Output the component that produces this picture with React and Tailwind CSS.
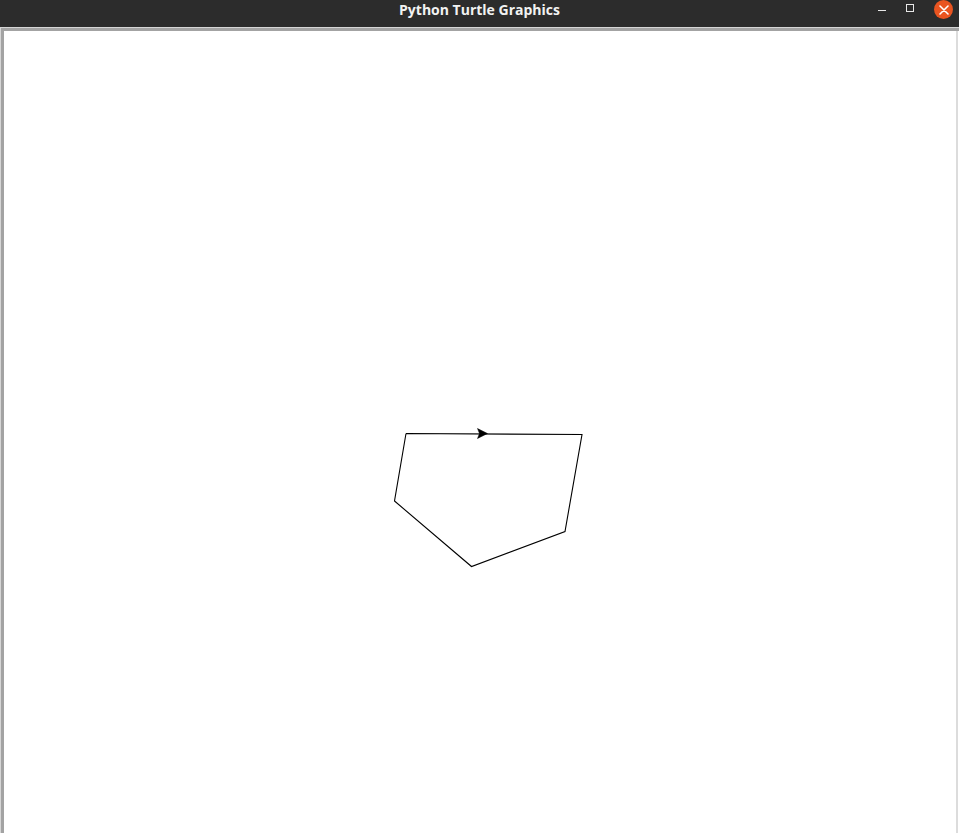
import React from 'react'

// turtle path, in canvas coordinates (canvas starts at page x=4, y=31)
const path = [
  [402, 402.5],
  [578, 403.5],
  [561, 500.5],
  [467.5, 535.5],
  [390.5, 470],
  [402, 402.5],
]

function TitleBar() {
  return (
    <div className="relative flex h-[27px] items-start justify-center bg-[#2c2c2c]">
      <span
        className="text-[14px] font-bold leading-[19px] text-[#f2f2f2]"
        style={{ fontFamily: '"Open Sans", "DejaVu Sans", sans-serif' }}
      >
        Python Turtle Graphics
      </span>
      <div className="absolute right-[6px] top-0 flex h-[19px] items-center gap-[20px]">
        <div className="mt-[2px] h-px w-[8px] bg-[#e8e8e8]" />
        <div className="mb-[3px] h-[8px] w-[8px] border border-[#e8e8e8]" />
        <div className="flex h-[19px] w-[19px] items-center justify-center rounded-full bg-[#e95420]">
          <svg width="10" height="10" viewBox="0 0 10 10">
            <path d="M1 1 L9 9 M9 1 L1 9" stroke="#fff" strokeWidth="1.6" strokeLinecap="round" />
          </svg>
        </div>
      </div>
    </div>
  )
}

function Canvas() {
  const d = path.map(([x, y], i) => (i ? 'L' : 'M') + x + ' ' + y).join(' ')
  const tx = 483.5
  const ty = 402.5
  return (
    <div className="relative h-full flex-1 bg-white">
      <svg width="952" height="802" viewBox="0 0 952 802" className="block">
        <path d={d} fill="none" stroke="#000" strokeWidth="1.1" />
        <polygon
          points={`${tx},${ty} ${tx - 10},${ty - 5} ${tx - 8},${ty} ${tx - 10},${ty + 5}`}
          fill="#000"
          stroke="#000"
          strokeWidth="0.5"
        />
      </svg>
    </div>
  )
}

export default function App() {
  return (
    <div className="flex h-[833px] w-[959px] flex-col overflow-hidden bg-white">
      <TitleBar />
      <div className="flex flex-1 flex-col bg-[#d6d6d6] pl-px pt-px">
        <div className="flex flex-1 bg-[#a3a3a3] pl-[3px] pt-[3px]">
          <Canvas />
          <div className="w-[2px] bg-[#dcdcdc]" />
          <div className="w-px bg-white" />
        </div>
      </div>
    </div>
  )
}
